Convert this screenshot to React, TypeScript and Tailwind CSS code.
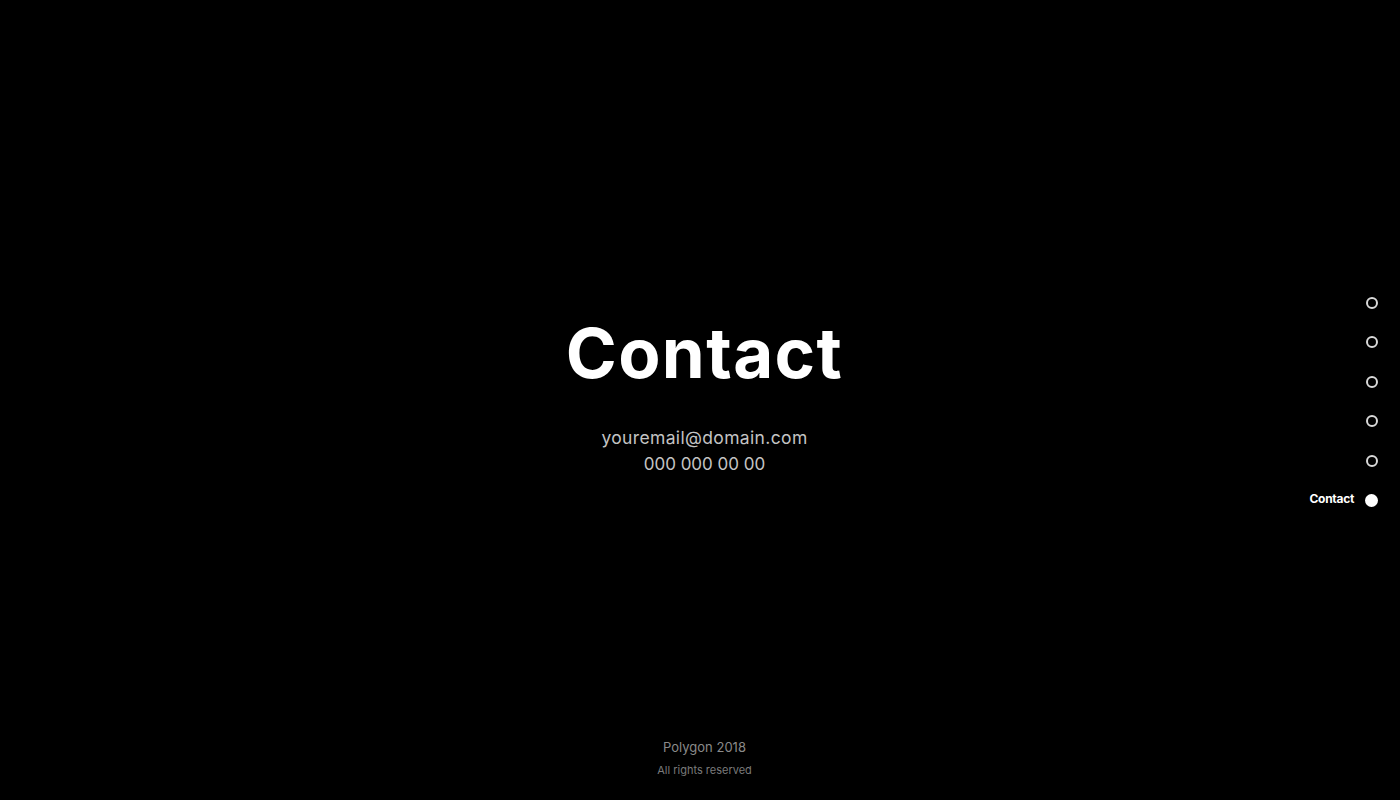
const sections = ['Home', 'About', 'Services', 'Work', 'Team', 'Contact']

function SideNav() {
  return (
    <nav className="absolute right-[22px] top-[296px] flex flex-col items-end gap-[26.6px]">
      {sections.map((name) => {
        const active = name === 'Contact'
        return (
          <div key={name} className="flex items-center gap-[11px] h-[13px]">
            {active && (
              <span className="text-[12px] font-bold text-white tracking-tight -mt-[3px]">{name}</span>
            )}
            {active ? (
              <span className="block w-[13px] h-[13px] rounded-full bg-white" />
            ) : (
              <span className="block w-[12px] h-[12px] rounded-full border-2 border-[#d8d8d8] mr-[0.5px]" />
            )}
          </div>
        )
      })}
    </nav>
  )
}

export default function App() {
  return (
    <div
      className="relative h-[800px] w-full bg-black flex flex-col items-center overflow-hidden pl-[9px]"
      style={{ fontFamily: "Inter, 'Noto Sans', sans-serif" }}
    >
      <main className="flex flex-col items-center pt-[319px]">
        <h1 className="text-[69px] leading-none font-bold text-white tracking-[0.02em]">Contact</h1>
        <div className="mt-[37px] flex flex-col items-center text-[17.5px] leading-[26px] text-[#c4c4c4]">
          <span className="tracking-[0.02em]">youremail@domain.com</span>
          <span className="text-[17px]">000 000 00 00</span>
        </div>
      </main>

      <footer className="mt-auto mb-[20px] flex flex-col items-center">
        <span className="text-[13px] leading-[20px] text-[#8a8a8a]">Polygon 2018</span>
        <span className="text-[11px] leading-[20px] text-[#7a7a7a] mt-[3px]">All rights reserved</span>
      </footer>

      <SideNav />
    </div>
  )
}
